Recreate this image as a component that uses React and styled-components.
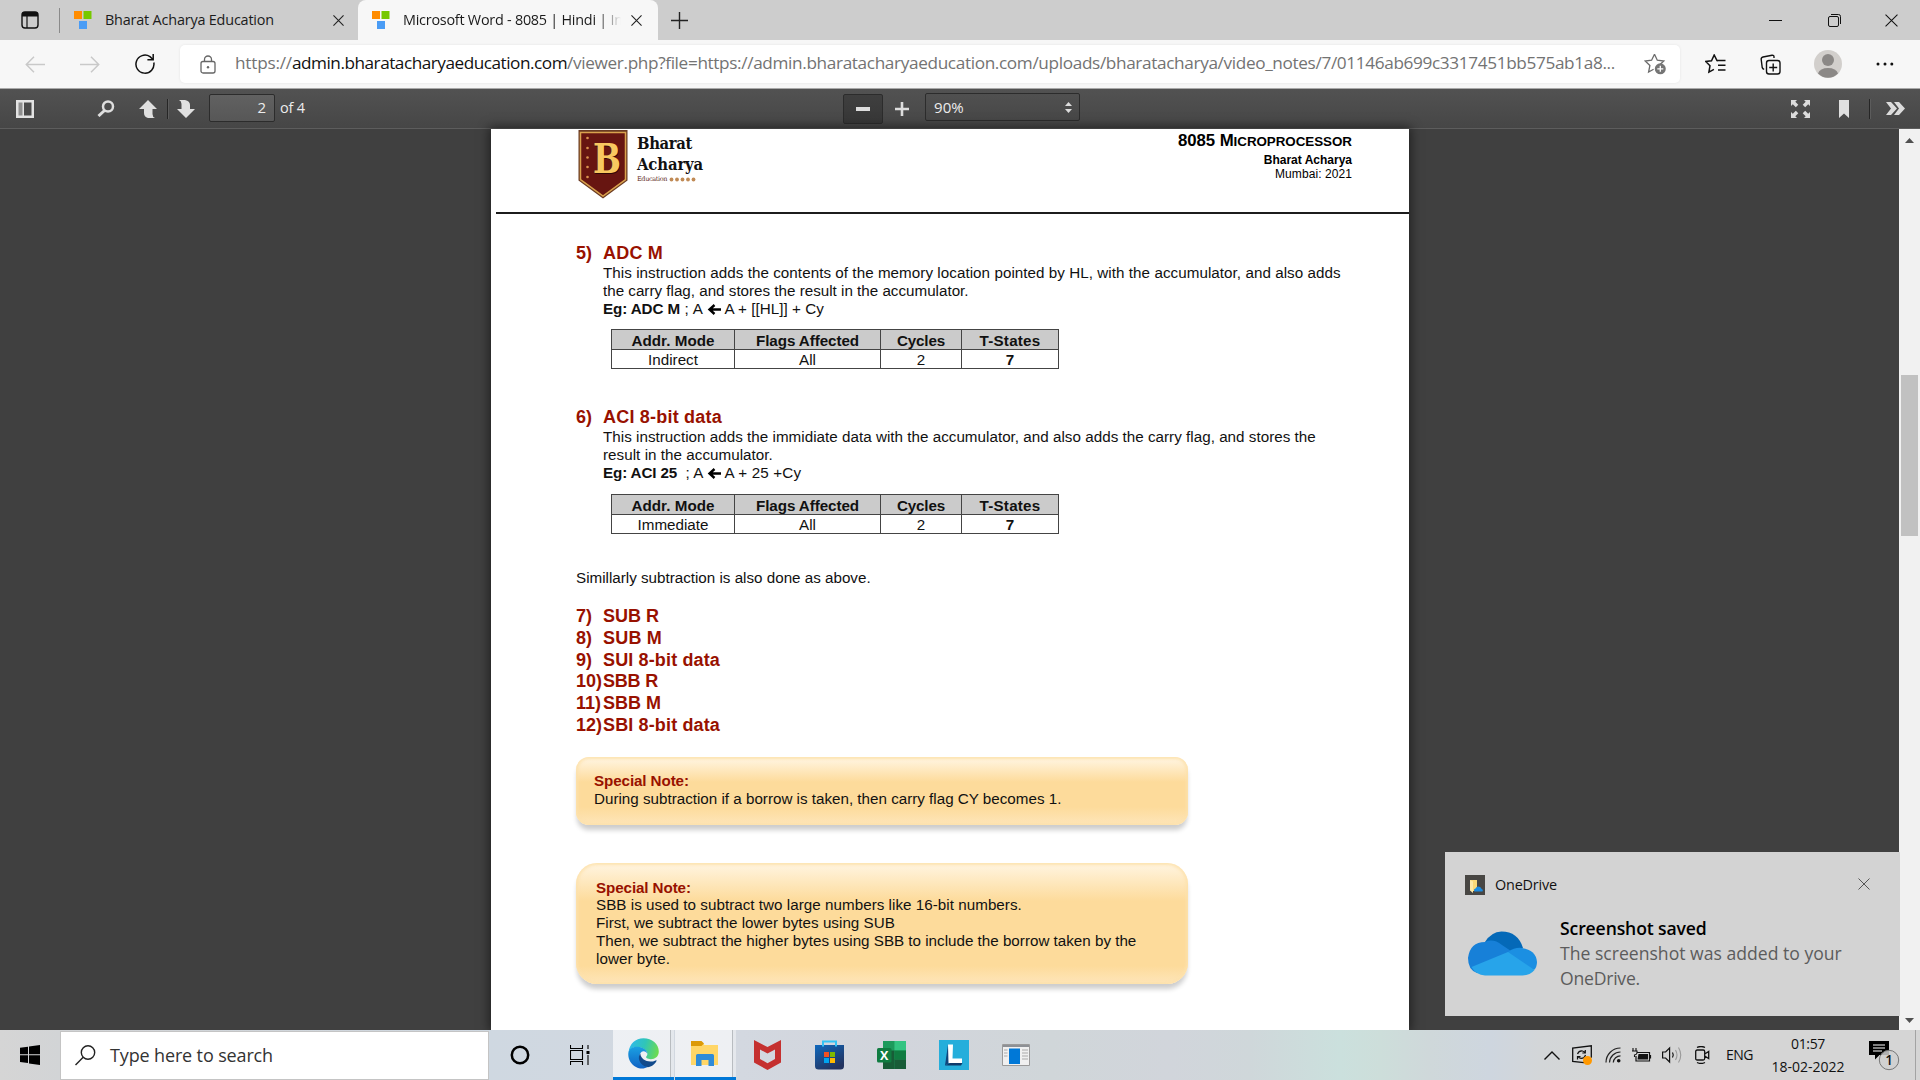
import React from "react";
import styled, { createGlobalStyle, css } from "styled-components";

const ui = `"Open Sans", "Noto Sans", sans-serif`;
const doc = `"Liberation Sans", Arial, sans-serif`;
const slab = `"DejaVu Serif Condensed", "DejaVu Serif", serif`;

const Global = createGlobalStyle`
  * { box-sizing: border-box; }
  body { margin: 0; background: #404040; font-family: ${ui}; overflow: hidden; }
  svg { display: block; flex: none; }
`;

const Screen = styled.div`
  width: 1920px;
  height: 1080px;
  display: flex;
  flex-direction: column;
  overflow: hidden;
`;
const Slot = styled.div`
  flex: none;
  margin-left: ${(p) => p.$ml || 0}px;
  margin-top: ${(p) => p.$mt || 0}px;
`;
const Run = styled.span`
  letter-spacing: ${(p) => p.$ls || 0}px;
  white-space: pre;
  color: ${(p) => p.$c || "inherit"};
  font-weight: ${(p) => (p.$b ? 700 : "inherit")};
`;

/* ---------- browser chrome ---------- */
const TabBar = styled.div`
  height: 40px;
  flex: none;
  display: flex;
  align-items: center;
  background: #cdcdcd;
`;
const TabDivider = styled.div`
  width: 1px;
  height: 25px;
  margin-left: 20px;
  background: #8a8a8a;
`;
const Tab = styled.div`
  height: 40px;
  width: ${(p) => (p.$active ? 300 : 298)}px;
  padding-left: 14px;
  display: flex;
  align-items: center;
  background: ${(p) => (p.$active ? "#f7f7f7" : "transparent")};
  border-radius: 8px 8px 0 0;
`;
const TabTitle = styled.div`
  width: 218px;
  margin-left: 13px;
  overflow: hidden;
  font-size: 14.4px;
  line-height: 38px;
  color: #1b1b1b;
  ${(p) => p.$fade && css`
    mask-image: linear-gradient(90deg, #000 195px, transparent 218px);
  `}
`;
const WindowButtons = styled.div`
  margin-left: auto;
  padding-right: 22px;
  display: flex;
  align-items: center;
  gap: 44px;
`;
const NavBar = styled.div`
  height: 49px;
  flex: none;
  display: flex;
  align-items: center;
  background: #f7f7f7;
  border-bottom: 1px solid #a9a9a9;
`;
const AddressBox = styled.div`
  width: 1500px;
  height: 38px;
  margin-left: 25px;
  padding: 0 14px 0 20px;
  display: flex;
  align-items: center;
  background: #fff;
  border-radius: 5px;
  box-shadow: 0 0 3px rgba(0, 0, 0, 0.08);
`;
const Url = styled.div`
  width: 1401px;
  margin-left: 19px;
  font-size: 17.2px;
  line-height: 36px;
  padding-bottom: 2px;
  color: #737373;
  white-space: pre;
`;

/* ---------- pdf toolbar ---------- */
const PdfBar = styled.div`
  height: 40px;
  flex: none;
  display: flex;
  align-items: center;
  background: linear-gradient(#525252, #464646);
  border-bottom: 1px solid #5d5d5d;
  color: #ececec;
`;
const BarRule = styled.div`
  width: 1px;
  height: 20px;
  margin-left: ${(p) => p.$ml}px;
  background: #262626;
  box-shadow: 1px 0 0 #5c5c5c;
`;
const PageInput = styled.div`
  width: 66px;
  height: 28px;
  margin: -1px 0 0 14px;
  padding-right: 8px;
  border: 1px solid #2c2c2c;
  border-radius: 2px;
  background: linear-gradient(#616161, #575757);
  text-align: right;
  font: 15px/24px ${ui};
`;
const BarText = styled.div`
  margin: -2px 0 0 ${(p) => p.$ml}px;
  font: 14.5px/26px ${ui};
`;
const ZoomOut = styled.div`
  width: 40px;
  height: 30px;
  margin-left: 538px;
  display: flex;
  align-items: center;
  justify-content: center;
  background: linear-gradient(#3f3f3f, #373737);
  border: 1px solid #2c2c2c;
  border-radius: 2px;
`;
const ZoomSelect = styled.div`
  width: 155px;
  height: 28px;
  margin: -3px 0 0 16px;
  padding: 0 7px 0 8px;
  display: flex;
  align-items: center;
  justify-content: space-between;
  border: 1px solid #2c2c2c;
  border-radius: 2px;
  background: linear-gradient(#505050, #474747);
  font: 15px/25px ${ui};
`;

/* ---------- document ---------- */
const Viewer = styled.div`
  height: 901px;
  flex: none;
  display: flex;
  background: #404040;
`;
const Sheet = styled.main`
  width: 918px;
  margin-left: 491px;
  margin-right: 490px;
  background: #fff;
  box-shadow: 0 0 10px 2px rgba(0, 0, 0, 0.5);
  font-family: ${doc};
  color: #111;
`;
const SheetHead = styled.header`
  height: 85px;
  margin-left: 5px;
  padding: 1px 57px 0 82px;
  display: flex;
  align-items: flex-start;
  border-bottom: 2px solid #1c1c1c;
`;
const Brand = styled.div`
  margin-left: 9px;
  padding-top: 4px;
  font: 700 16.5px/20.5px ${slab};
  color: #111;
`;
const BrandSub = styled.div`
  display: flex;
  align-items: center;
  gap: 2px;
  font: 6.5px/9px "DejaVu Serif", serif;
  color: #5f2a22;
`;
const Credits = styled.div`
  margin-left: auto;
  text-align: right;
  color: #000;
`;
const CourseTitle = styled.div`
  font-size: 16.8px;
  font-weight: 700;
  line-height: 22px;
`;
const Small = styled.span`
  font-size: 13.4px;
`;
const CreditLine = styled.div`
  font-size: 12px;
  line-height: ${(p) => (p.$b ? 14 : 15)}px;
  font-weight: ${(p) => (p.$b ? 700 : 400)};
`;
const Body = styled.div`
  padding: 28px 0 0 85px;
`;
const Heading = styled.h2`
  margin: 0;
  display: flex;
  font-size: 18px;
  line-height: ${(p) => p.$lh || 22}px;
  color: #981100;
`;
const Marker = styled.span`
  width: 27px;
  white-space: nowrap;
  flex: none;
`;
const Line = styled.div`
  height: 18px;
  padding-left: ${(p) => p.$in || 0}px;
  display: flex;
  align-items: center;
  font-size: 15.2px;
  line-height: 18px;
`;
const Table = styled.div`
  width: 448px;
  margin: ${(p) => p.$mt}px 0 0 35px;
  display: grid;
  grid-template-columns: 123px 146px 81px 97px;
  grid-template-rows: 20px 19px;
  border: solid #444;
  border-width: 1px 0 0 1px;
`;
const Cell = styled.div`
  border: solid #444;
  border-width: 0 1px 1px 0;
  display: flex;
  justify-content: center;
  font-size: 15.2px;
  line-height: ${(p) => (p.$head ? 21 : 19)}px;
  overflow: hidden;
  background: ${(p) => (p.$head ? "#cbcbcb" : "#fff")};
  font-weight: ${(p) => (p.$b || p.$head ? 700 : 400)};
`;
const Note = styled.section`
  width: 612px;
  height: ${(p) => p.$h}px;
  margin-top: ${(p) => p.$mt}px;
  padding: ${(p) => p.$pad};
  border-radius: ${(p) => p.$r}px;
  background: linear-gradient(#fff3dc 3px, #fddb9b ${(p) => p.$stop}px, #fddb9b calc(100% - 18px), #fee6ba);
  box-shadow: inset 0 0 3px 2px rgba(253, 225, 172, 0.9), 0 6px 5px -1px rgba(0, 0, 0, 0.2);
`;
const NoteTitle = styled.div`
  height: ${(p) => p.$h}px;
  font-size: 15.2px;
  line-height: 18px;
  font-weight: 700;
  color: #981100;
`;
const Scrollbar = styled.div`
  width: 21px;
  padding: 9px 0 7px 2px;
  display: flex;
  flex-direction: column;
  background: #f1f1f1;
`;
const Thumb = styled.div`
  width: 17px;
  height: 161px;
  margin: 232px 0 auto;
  background: #c1c1c1;
`;

/* ---------- toast ---------- */
const Toast = styled.aside`
  position: fixed;
  left: 1445px;
  top: 852px;
  width: 455px;
  height: 164px;
  padding: 23px 30px 0 20px;
  background: #d3d3d3;
`;
const ToastHead = styled.div`
  height: 20px;
  display: flex;
  align-items: center;
  font-size: 14.4px;
  line-height: 20px;
  color: #111;
`;
const ToastName = styled.div`
  width: 64px;
  margin-left: 10px;
`;
const ToastBody = styled.div`
  display: flex;
  padding: 21px 0 0 2px;
`;
const ToastText = styled.div`
  margin-left: 22px;
  font-size: 17.6px;
  line-height: 25px;
  color: #5c5c5c;
`;
const ToastLine = styled.div`
  height: 25px;
  color: ${(p) => p.$c || "inherit"};
  font-weight: ${(p) => (p.$b ? 600 : 400)};
`;

/* ---------- taskbar ---------- */
const Taskbar = styled.footer`
  height: 50px;
  flex: none;
  display: flex;
  align-items: center;
  color: #111;
  background: linear-gradient(90deg, #d5d5d5 0, #d2d4d6 60px, #cfd8e1 490px, #d3d8e0 740px, #d2d5dc 900px,
    #d0d6d9 1050px, #d1d5db 1170px, #cfd7da 1250px, #cbe0dd 1340px, #cddeda 1380px, #cfd8da 1430px,
    #ced6df 1490px, #d3d6d8 1540px, #d5d5d5 1640px);
`;
const SearchBox = styled.div`
  width: 429px;
  height: 49px;
  margin-left: 20px;
  padding-left: 14px;
  display: flex;
  align-items: center;
  background: #fff;
  border: 1px solid #c4c4c4;
  font-size: 18px;
  line-height: 48px;
  color: #333;
`;
const AppCell = styled.div`
  width: ${(p) => p.$w}px;
  height: 50px;
  margin-left: ${(p) => p.$ml}px;
  padding-left: ${(p) => p.$pl}px;
  display: flex;
  align-items: center;
  background: linear-gradient(90deg, rgba(255, 255, 255, 0.62) ${(p) => p.$w - 4}px, #b8bcc0 0, #b8bcc0 ${(p) => p.$w - 3}px, rgba(255, 255, 255, 0.4) 0);
  border-bottom: 3px solid #0078d7;
`;
const Lang = styled.div`
  width: 27px;
  margin-left: 16px;
  font-size: 14px;
  line-height: 20px;
`;
const Clock = styled.div`
  width: 74px;
  margin: -1px 0 0 18px;
  text-align: center;
  font-size: 14px;
  line-height: 23px;
`;
const ShowDesktop = styled.div`
  width: 1px;
  height: 50px;
  margin-left: 15px;
  background: #a3a3a3;
`;

const Icon = ({ w, h, children, vb }) => (
  <svg width={w} height={h} viewBox={vb || `0 0 ${w} ${h}`} fill="none">{children}</svg>
);
const Favicon = () => (
  <Icon w={18} h={18}>
    <path fill="#ff8c00" d="M0 0h8v8H0z" />
    <path fill="#76c800" d="M9.5 0h8v8h-8z" />
    <path fill="#4a9cf5" d="M5 10h8v8H5z" />
  </Icon>
);
const Cross = ({ s, c = "#222", sw = 1.2 }) => (
  <Icon w={s} h={s} vb="0 0 12 12"><path d="M.5.5l11 11M11.500.5l-11 11" stroke={c} strokeWidth={sw} /></Icon>
);
const LeftArrow = () => (
  <Icon w={14} h={11}><path d="M7.500 1 2.500 5.500l5 4.500M2.500 5.500H14" stroke="#000" strokeWidth="2.400" /></Icon>
);

const Grid = ({ mode, mt }) => (
  <Table $mt={mt}>
    <Cell $head><Run $ls={0.03}>Addr. Mode</Run></Cell>
    <Cell $head><Run $ls={-0.08}>Flags Affected</Run></Cell>
    <Cell $head><Run $ls={-0.16}>Cycles</Run></Cell>
    <Cell $head><Run $ls={0.23}>T-States</Run></Cell>
    <Cell>{mode}</Cell>
    <Cell>All</Cell>
    <Cell>2</Cell>
    <Cell $b>7</Cell>
  </Table>
);

const list = [
  ["7)", "SUB R", 0], ["8)", "SUB M", 0.2], ["9)", "SUI 8-bit data", 0.14],
  ["10)", "SBB R", -0.2], ["11)", "SBB M", 0], ["12)", "SBI 8-bit data", 0.14],
];

export default function App() {
  return (
    <Screen>
      <Global />
      <TabBar>
        <Slot $ml={21}><Icon w={18} h={18}><rect x="1" y="1" width="16" height="16" rx="3" stroke="#111" strokeWidth="1.400" /><path d="M1 2.500Q1 1 3 1h12q2 0 2 2v2.500H1z" fill="#111" /><path d="M6 5v12" stroke="#111" strokeWidth="1.200" /></Icon></Slot>
        <TabDivider />
        <Tab>
          <Favicon />
          <TabTitle><Run $ls={-0.18}>Bharat Acharya Education</Run></TabTitle>
          <Slot $ml={10}><Cross s={11} /></Slot>
        </Tab>
        <Tab $active>
          <Favicon />
          <TabTitle $fade><Run $ls={-0.24}>Microsoft Word - 8085 | Hindi | In</Run></TabTitle>
          <Slot $ml={10}><Cross s={11} /></Slot>
        </Tab>
        <Slot $ml={13}><Icon w={17} h={17}><path d="M8.500 0v17M0 8.500h17" stroke="#222" strokeWidth="1.400" /></Icon></Slot>
        <WindowButtons>
          <Icon w={15} h={13}><path d="M0 6.500h13" stroke="#111" /></Icon>
          <Icon w={13} h={13}><rect x=".5" y="2.500" width="10" height="10" rx="1.500" stroke="#111" /><path d="M3 .5h7.500q2 0 2 2V10" stroke="#111" /></Icon>
          <Cross s={13} c="#111" sw={0.95} />
        </WindowButtons>
      </TabBar>
      <NavBar>
        <Slot $ml={25}><Icon w={20} h={17}><path d="M9 .8 1.300 8.500 9 16.200M1.300 8.500H20" stroke="#c9c9c9" strokeWidth="1.500" /></Icon></Slot>
        <Slot $ml={35}><Icon w={20} h={17}><path d="m11 .8 7.700 7.700-7.700 7.700M18.700 8.500H0" stroke="#c9c9c9" strokeWidth="1.500" /></Icon></Slot>
        <Slot $ml={35}><Icon w={20} h={20}><path d="M18.800 8.500A9 9 0 1 1 15 2.700L18 5.500M18.200 0v5.800h-5.800" stroke="#111" strokeWidth="1.500" /></Icon></Slot>
        <AddressBox>
          <Icon w={16} h={19}><rect x="1" y="6.500" width="14" height="11.500" rx="2" stroke="#666" strokeWidth="1.300" /><path d="M4.500 6.500V4.500a3.500 3.500 0 0 1 7 0v2" stroke="#666" strokeWidth="1.300" /><circle cx="8" cy="12.300" r="1.200" fill="#666" /></Icon>
          <Url><Run $ls={-0.21}>https://</Run><Run $ls={-0.483} $c="#111">admin.bharatacharyaeducation.com</Run><Run $ls={-0.354}>/viewer.php?file=https://admin.bharatacharyaeducation.com/uploads/bharatacharya/video_notes/7/01146ab699c3317451bb575ab1a8...</Run></Url>
          <Slot $ml={8}><Icon w={22} h={22}><path d="m10.500 1.200 2.800 6 6.500.8-3.500 3.300M10.500 1.200l-2.900 6-6.400.8 4.700 4.500-1.300 6.500 5-2.700" stroke="#6b6b6b" strokeWidth="1.300" /><circle cx="16.300" cy="15.800" r="5.500" fill="#757575" /><path d="M16.300 12.800v6M13.300 15.800h6" stroke="#fff" strokeWidth="1.300" /></Icon></Slot>
        </AddressBox>
        <Slot $ml={25}><Icon w={21} h={20}><path d="M13 6.800 12 6.500 9.200 1 6.500 6.700l-5.800.8 4.300 4.200-1.100 6.500 5-2.800M12 6.600h8.500M13 11.300h7.500M13 16h7.500" stroke="#111" strokeWidth="1.500" /></Icon></Slot>
        <Slot $ml={34}><Icon w={21} h={21}><rect x="6.500" y="6.500" width="13.500" height="13.500" rx="2.500" stroke="#111" strokeWidth="1.400" /><path d="M13.200 9.500v8M9.200 13.500h8M14 4V3q0-2-2-1.800L3 3Q1 3.500 1.200 5.500l1 8q.3 1.500 2 1.900" stroke="#111" strokeWidth="1.400" /></Icon></Slot>
        <Slot $ml={33}><Icon w={28} h={28}><circle cx="14" cy="14" r="14" fill="#d2cfcc" /><circle cx="14" cy="10" r="6" fill="#8b8886" /><path d="M4 23.500Q6 18 14 18t10 5.500A14 14 0 0 1 4 23.500" fill="#8b8886" /></Icon></Slot>
        <Slot $ml={34}><Icon w={18} h={4}><circle cx="2" cy="2" r="1.500" fill="#111" /><circle cx="9" cy="2" r="1.500" fill="#111" /><circle cx="15.800" cy="2" r="1.500" fill="#111" /></Icon></Slot>
      </NavBar>
      <PdfBar>
        <Slot $ml={16}><Icon w={18} h={18}><path d="M0 0h18v18H0z" fill="#e3e3e3" /><path d="M2.500 2.500h4v13h-4z" fill="#8f8f8f" /><path d="M8 2.500h7.500v13H8z" fill="#4a4a4a" /></Icon></Slot>
        <Slot $ml={63}><Icon w={18} h={17}><circle cx="11" cy="6.500" r="5" stroke="#dedede" strokeWidth="2.500" /><path d="m7.500 10.500-6 5.500" stroke="#dedede" strokeWidth="3" /></Icon></Slot>
        <Slot $ml={24}><Icon w={18} h={18}><path d="M9 0 18 9h-4.500v5q0 3 2.500 4H9q-4-1-4-5V9H0z" fill="#e0e0e0" /></Icon></Slot>
        <BarRule $ml={10} />
        <Slot $ml={9}><Icon w={18} h={18}><path d="M9 18 0 9h4.500V4Q4.500 1 2 0h6q5 1 5 5v4h5z" fill="#e0e0e0" /></Icon></Slot>
        <PageInput>2</PageInput>
        <BarText $ml={5}><Run $ls={-0.17}>of 4</Run></BarText>
        <ZoomOut><Icon w={14} h={4}><path d="M0 0h14v4H0z" fill="#ddd" /></Icon></ZoomOut>
        <Slot $ml={12}><Icon w={14} h={14}><path d="M7 0v14M0 7h14" stroke="#ddd" strokeWidth="2.600" /></Icon></Slot>
        <ZoomSelect><Run $ls={0.1}>90%</Run><Icon w={7} h={11}><path d="M3.500 0 7 4H0zM3.500 11 0 7h7z" fill="#ddd" /></Icon></ZoomSelect>
        <Slot $ml={711}><Icon w={19} h={18}><path d="M0 0h6L4.300 1.700l3 3-2.500 2.500-3-3L0 6zM19 0v6l-1.800-1.800-3 3-2.500-2.500 3-3L13 0zM0 18v-6l1.800 1.800 3-3 2.500 2.500-3 3L6 18zM19 18h-6l1.700-1.700-3-3 2.500-2.500 3 3L19 12z" fill="#dcdcdc" /></Icon></Slot>
        <Slot $ml={29}><Icon w={10} h={18}><path d="M0 0h10v18l-5-4.500L0 18z" fill="#e0e0e0" /></Icon></Slot>
        <BarRule $ml={20} />
        <Slot $ml={16}><Icon w={19} h={13}><path d="M0 0h5l6 6.500L5 13H0l5-6.500zM8 0h5l6 6.500-6 6.500H8l5-6.500z" fill="#dcdcdc" /></Icon></Slot>
      </PdfBar>
      <Viewer>
        <Sheet>
          <SheetHead>
            <Icon w={50} h={69}>
              <path d="M.5 0h49v50.500L25 68.500.5 50.500z" fill="#6a3a22" />
              <path d="M2.500 2.500h45v47L25 66 2.500 49.500z" fill="#671511" stroke="#d9a24e" strokeWidth="1.500" />
              <g fill="#d9924e"><circle cx="9.500" cy="8" r="1.300" /><circle cx="9.500" cy="18" r="1.300" /><circle cx="9.500" cy="27.500" r="1.300" /><circle cx="9.500" cy="37" r="1.300" /><circle cx="9.500" cy="47" r="1.300" /></g>
              <text x="15.500" y="43.500" fontFamily="DejaVu Serif, serif" fontWeight="700" fontSize="41" textLength="28" lengthAdjust="spacingAndGlyphs" fill="#2f0806">B</text>
              <text x="15" y="42.500" fontFamily="DejaVu Serif, serif" fontWeight="700" fontSize="41" textLength="28" lengthAdjust="spacingAndGlyphs" fill="#f8c860">B</text>
            </Icon>
            <Brand>
              <div><Run $ls={-0.38}>Bharat</Run></div>
              <div><Run $ls={-0.15}>Acharya</Run></div>
              <BrandSub><Run $ls={-0.378}>Education</Run><Icon w={27} h={5}><g fill="#c08a55"><circle cx="2.500" cy="2.500" r="1.900" /><circle cx="8" cy="2.500" r="1.900" /><circle cx="13.500" cy="2.500" r="1.900" /><circle cx="19" cy="2.500" r="1.900" /><circle cx="24.500" cy="2.500" r="1.900" /></g></Icon></BrandSub>
            </Brand>
            <Credits>
              <CourseTitle><Run $ls={-0.05}>8085 M<Small>ICROPROCESSOR</Small></Run></CourseTitle>
              <CreditLine $b>Bharat Acharya</CreditLine>
              <CreditLine><Run $ls={0.08}>Mumbai: 2021</Run></CreditLine>
            </Credits>
          </SheetHead>
          <Body>
            <Heading><Marker>5)</Marker><Run $ls={0.2}>ADC M</Run></Heading>
            <Line $in={27}><Run $ls={0.053}>This instruction adds the contents of the memory location pointed by HL, with the accumulator, and also adds</Run></Line>
            <Line $in={27}><Run>the carry flag, and stores the result in the accumulator.</Run></Line>
            <Line $in={27}><Run $b $ls={-0.1}>Eg: ADC M</Run><Run $ls={0.33}> ; A </Run><LeftArrow /><Run $ls={0.05}> A + [[HL]] + Cy</Run></Line>
            <Grid mode="Indirect" mt={11} />
            <Slot $mt={37}>
              <Heading><Marker>6)</Marker><Run $ls={0.21}>ACI 8-bit data</Run></Heading>
              <Line $in={27}><Run $ls={0.026}>This instruction adds the immidiate data with the accumulator, and also adds the carry flag, and stores the</Run></Line>
              <Line $in={27}><Run $ls={0.04}>result in the accumulator.</Run></Line>
              <Line $in={27}><Run $b $ls={-0.14}>Eg: ACI 25</Run><Run $ls={0.07}>  ; A </Run><LeftArrow /><Run $ls={0.15}> A + 25 +Cy</Run></Line>
            </Slot>
            <Grid mode="Immediate" mt={12} />
            <Slot $mt={35}><Line>Simillarly subtraction is also done as above.</Line></Slot>
            <Slot $mt={19}>
              {list.map(([n, t, ls]) => <Heading key={n} $lh={21.8}><Marker>{n}</Marker><Run $ls={ls}>{t}</Run></Heading>)}
            </Slot>
            <Note $mt={20} $h={68} $pad="15px 0 0 18px" $r={13} $stop={25}>
              <NoteTitle $h={18}><Run $ls={-0.1}>Special Note:</Run></NoteTitle>
              <Line>During subtraction if a borrow is taken, then carry flag CY becomes 1.</Line>
            </Note>
            <Note $mt={38} $h={121} $pad="16px 0 0 20px" $r={21} $stop={38}>
              <NoteTitle $h={17}><Run $ls={-0.1}>Special Note:</Run></NoteTitle>
              <Line><Run $ls={0.033}>SBB is used to subtract two large numbers like 16-bit numbers.</Run></Line>
              <Line><Run $ls={0.02}>First, we subtract the lower bytes using SUB</Run></Line>
              <Line>Then, we subtract the higher bytes using SBB to include the borrow taken by the</Line>
              <Line><Run $ls={0.05}>lower byte.</Run></Line>
            </Note>
          </Body>
        </Sheet>
        <Scrollbar>
          <Slot $ml={4}><Icon w={9} h={5}><path d="M4.500 0 9 5H0z" fill="#505050" /></Icon></Slot>
          <Thumb />
          <Slot $ml={4}><Icon w={9} h={5}><path d="M0 0h9L4.500 5z" fill="#505050" /></Icon></Slot>
        </Scrollbar>
      </Viewer>
      <Taskbar>
        <Slot $ml={20}><Icon w={20} h={20}><path d="M0 2.800 8 1.700v7.600H0zM9 1.500 20 0v9.300H9zM0 10.300h8v7.800l-8-1.100zM9 10.300h11V20L9 18.400z" fill="#000" /></Icon></Slot>
        <SearchBox><Icon w={21} h={21}><circle cx="13" cy="7.500" r="6.700" stroke="#222" strokeWidth="1.400" /><path d="M8.200 12.200.5 20" stroke="#222" strokeWidth="1.400" /></Icon><Slot $ml={14}><Run $ls={-0.139}>Type here to search</Run></Slot></SearchBox>
        <Slot $ml={21}><Icon w={20} h={20}><circle cx="10" cy="10" r="8.200" stroke="#000" strokeWidth="2.500" /></Icon></Slot>
        <Slot $ml={40}><Icon w={20} h={20}><path d="M.5 0v3.500h12V0M.5 20v-3.500h12V20M.5 5.500h12v9H.5zM18 0v4M18 10v10" stroke="#000" strokeWidth="1.100" /><path d="M16.500 6h3v3h-3z" fill="#000" /></Icon></Slot>
        <AppCell $ml={23} $w={61} $pl={15}>
          <Icon w={31} h={31} vb="0 0 31 31">
            <defs>
              <linearGradient id="eg1" x1="0" x2="1" y1=".4" y2=".6"><stop stopColor="#2fb9ea" /><stop offset=".5" stopColor="#30c5b8" /><stop offset="1" stopColor="#6fdc4d" /></linearGradient>
              <linearGradient id="eg2" x1="0" x2="0" y1="0" y2="1"><stop stopColor="#1ba0e2" /><stop offset="1" stopColor="#0f62c4" /></linearGradient>
            </defs>
            <path d="M.6 14C1.500 6 7.500.3 15.500.3 24 .3 30.800 6 30.800 13.500c0 5-3.800 7.700-8 7.700-3.600 0-5.300-1.400-4.500-2.600.9-1.100 1.200-2 1-3.300C18.800 12 14 9 9 9 5 9 2 11 .6 14" fill="url(#eg1)" />
            <path d="M.3 15.500C.5 11 5 8.300 10 8.800c5 .5 9.300 3.400 9.300 7-.7-1.700-2.300-2.700-4-2.500-3 .4-4.300 3.500-3.500 7 .8 4 4 7.300 8.200 8.500C16.500 31 12 31.200 8 29 3 26.300 0 21.500.3 15.500" fill="url(#eg2)" />
            <path d="M12.300 15.600c-3 3.400-1.500 11.500 6.700 13.500 4 .4 7.800-2.800 9.500-6 .3-.7-.2-1.100-.9-.7-6 2.800-14.500.6-15.300-6.800" fill="#114a8c" />
          </Icon>
        </AppCell>
        <AppCell $ml={1} $w={61} $pl={16}>
          <Icon w={28} h={26}><path d="M0 1h11l2.500 3H27v20H0z" fill="#ffd667" /><path d="M0 0h10.500l2.500 2.500L10.500 5H0z" fill="#dc9a07" /><path d="M5 25V14.500q0-1.500 1.500-1.500h15q1.500 0 1.500 1.500V25h-5.500v-6h-7v6z" fill="#2f8bd8" /></Icon>
        </AppCell>
        <Slot $ml={18}><Icon w={27} h={30}><path d="M0 0 13.500 7 27 0v22.500L13.500 30 0 22.500zM6 9.500V19l7.500 4.200L21 19V9.500L13.500 13.500z" fill="#c5302f" fillRule="evenodd" /></Icon></Slot>
        <Slot $ml={34}><Icon w={29} h={30}><path d="M0 5h29v21q0 3.500-3.500 3.500h-22Q0 29.500 0 26z" fill="url(#st)" /><defs><linearGradient id="st" x1="0" x2=".6" y1="0" y2="1"><stop stopColor="#0f68bd" /><stop offset="1" stopColor="#23335f" /></linearGradient></defs><path d="M8 6.500V1.500h13v5" stroke="#32c3f5" strokeWidth="2" /><path d="M9 12h5v5H9z" fill="#f25022" /><path d="M15 12h5v5h-5z" fill="#7fba00" /><path d="M9 18h5v5H9z" fill="#00a4ef" /><path d="M15 18h5v5h-5z" fill="#ffb900" /></Icon></Slot>
        <Slot $ml={33}><Icon w={29} h={28}><path d="M6 0h23v28H6z" fill="#21a366" /><path d="M6 0h11.500v9.500H6z" fill="#1d9a5c" /><path d="M17.500 0H29v9.500H17.500z" fill="#33c481" /><path d="M6 9.500h11.500V28H6z" fill="#185c37" /><path d="M17.500 9.500H29v9H17.500z" fill="#107c41" /><path d="M17.500 18.500H29V28H17.500z" fill="#185c37" /><rect y="7" width="14.500" height="14.500" rx="1.500" fill="#107c41" /><text x="3" y="18.700" fontFamily="Open Sans, sans-serif" fontWeight="700" fontSize="12.500" fill="#fff">X</text></Icon></Slot>
        <Slot $ml={33}><Icon w={30} h={30}><path d="M0 0h30v30H0z" fill="#25aedb" /><path d="M9 4.500 6 25.500l7-4z" fill="#11457c" /><path d="M6 25.500 13 22l10.500 1-1.500 2.500z" fill="#0e3a6b" /><path d="M9 4.500h5L13.500 18.500H23v4.500H9.500z" fill="#fff" /></Icon></Slot>
        <Slot $ml={33}><Icon w={28} h={22}><path d="M.5.5h27v21H.5z" fill="#f0f0f0" stroke="#9a9a9a" /><path d="M1 1h26v2H1z" fill="#8d9095" /><path d="M7 4.500h11V20H7z" fill="#0078d7" /><path d="M2 6h3.500M2 9h3.500M2 12h3.500M20 6h6M20 9h6M20 12h6M20 15h6" stroke="#aaa" /></Icon></Slot>
        <Slot $ml={514}><Icon w={16} h={9}><path d="M.5 8.500 8 1l7.500 7.500" stroke="#111" strokeWidth="1.400" /></Icon></Slot>
        <Slot $ml={12}><Icon w={21} h={20}><path d="M12 17.700.7 16.500V3L19.300.8v12" stroke="#111" strokeWidth="1.300" /><path d="M5.500 9q1.500-3.500 5-3 1.500.3 2.500 1.700M13.300 5v3h-3M13.500 10q-1 3.500-4.500 3.400-2-.2-3-1.900M5.500 14.500v-3h3" stroke="#111" strokeWidth="1.200" /><circle cx="15.500" cy="15.500" r="4.500" fill="#ff9800" /></Icon></Slot>
        <Slot $ml={12}><Icon w={16} h={16}><path d="M1 15.500A14.500 14.500 0 0 1 15.500 1M4.500 15.500a11 11 0 0 1 11-10.500M8.300 15.500a7.200 7.200 0 0 1 7.200-6.700" stroke="#222" strokeWidth="1.200" /><circle cx="13.700" cy="13.700" r="1.800" fill="#111" /></Icon></Slot>
        <Slot $ml={11}><Icon w={20} h={14}><path d="M5 4.500h12.500v8.500H4V8M18.500 7v3.500" stroke="#111" strokeWidth="1.200" /><path d="M6.500 6h9.500v5.500H5.500z" fill="#111" /><path d="M1 0v2.500M4 0v2.500M0 3h5v2q0 1.500-2.500 2V9" stroke="#111" strokeWidth="1.100" /></Icon></Slot>
        <Slot $ml={10}><Icon w={20} h={18}><path d="M.6 6h3l4-4v14l-4-4h-3z" stroke="#111" strokeWidth="1.200" /><path d="M10.500 6.500q1.500 2.500 0 5" stroke="#111" strokeWidth="1.200" /><path d="M13.500 4q3 5 0 10M16.500 1.500q4.500 7.500 0 15" stroke="#999" strokeWidth="1.100" /></Icon></Slot>
        <Slot $ml={13}><Icon w={15} h={18}><path d="M.7 5.500q0-1.500 1.500-1.500h6q1.500 0 1.500 1.500v7q0 1.500-1.500 1.500h-6q-1.500 0-1.500-1.500zM9.700 8l4-2.500v7l-4-2.500M2 1.500q4-2 8 0M2 16.500q4 2 8 0" stroke="#111" strokeWidth="1.300" /></Icon></Slot>
        <Lang><Run $ls={-0.5}>ENG</Run></Lang>
        <Clock><div><Run $ls={-0.35}>01:57</Run></div><div>18-02-2022</div></Clock>
        <Slot $ml={24}><Icon w={31} h={32}><path d="M0 2h20v14h-9.500L6 20.500V16H0z" fill="#000" /><path d="M4 6h12M4 9h12M4 12h9" stroke="#fff" strokeWidth="1.200" /><circle cx="20" cy="21" r="9.700" fill="#d0d0d0" fillOpacity=".85" stroke="#777" /><text x="20" y="26" textAnchor="middle" fontFamily="Open Sans, sans-serif" fontWeight="600" fontSize="13.500" fill="#111">1</text></Icon></Slot>
        <ShowDesktop />
      </Taskbar>
      <Toast>
        <ToastHead>
          <Icon w={20} h={20}><path d="M0 0h20v20H0z" fill="#484643" /><path d="M5 5h7v11H8l-3-1z" fill="#fbd978" /><path d="M5 5l3 1.500V18l-3-2.500z" fill="#ffe9a8" /><path d="M9.500 16.500q-1.500-2.500 1-3 1.500-3 4.500-1.500 1.500 1 1.500 2 2 .5 1 2.500z" fill="#1b8ae0" /></Icon>
          <ToastName><Run $ls={-0.17}>OneDrive</Run></ToastName>
          <Slot $ml={299} $mt={-3}><Cross s={12} c="#555" sw={1} /></Slot>
        </ToastHead>
        <ToastBody>
          <Slot $mt={14}>
            <Icon w={71} h={48}>
              <path d="M18 12Q24 2 34.500 1.500 51 1.500 56 18L42 24z" fill="#0469b8" />
              <path d="M18 12Q26 8 35 15L56 29 10 43Q1 40 1 28 3 12 18 12" fill="#1780d8" />
              <path d="M41 22Q48 17 55 18q14 2 15 14 0 5-3 8L38 27z" fill="#1b8fe2" />
              <path d="M4.500 37 41 22l26.500 18q-4 5-12 5.500H18Q9 45 4.500 37" fill="#27a4ea" />
            </Icon>
          </Slot>
          <ToastText>
            <ToastLine $b $c="#000"><Run $ls={-0.13}>Screenshot saved</Run></ToastLine>
            <ToastLine>The screenshot was added to your</ToastLine>
            <ToastLine><Run $ls={-0.23}>OneDrive.</Run></ToastLine>
          </ToastText>
        </ToastBody>
      </Toast>
    </Screen>
  );
}
